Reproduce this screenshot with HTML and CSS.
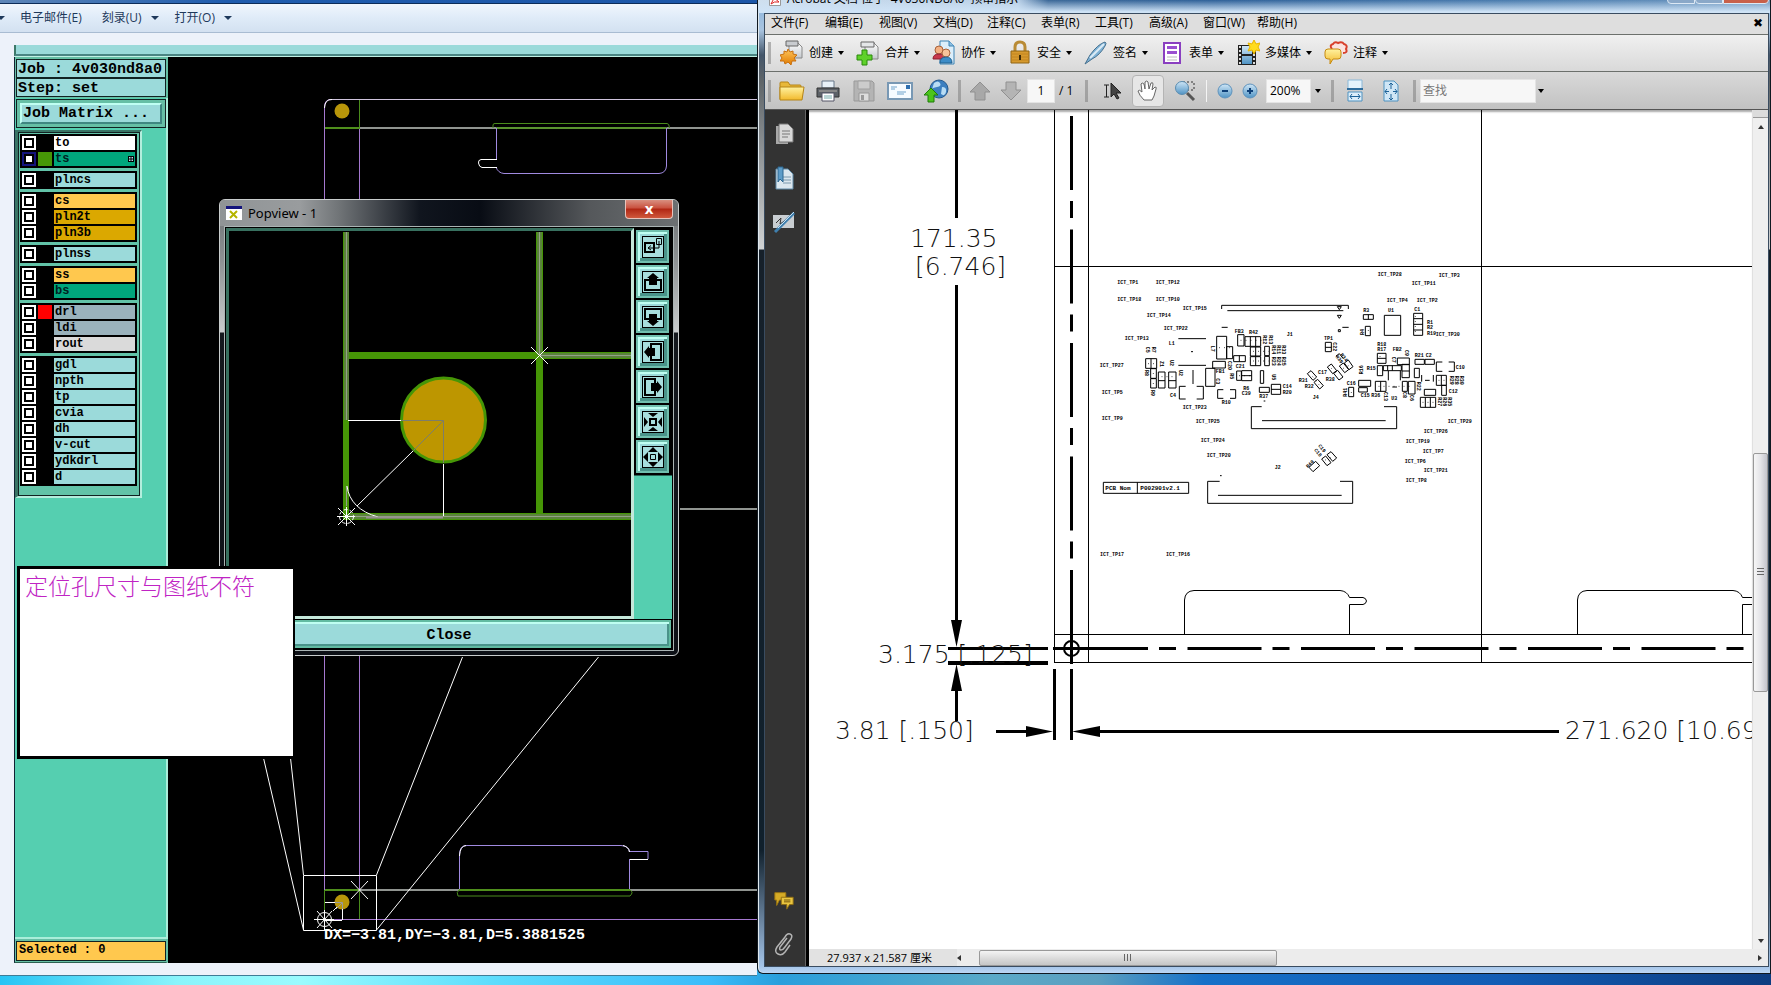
FILE: index.html
```html
<!DOCTYPE html>
<html lang="zh-CN">
<head>
<meta charset="utf-8">
<title>Popview - 1</title>
<link rel="stylesheet" href="styles.css">
</head>
<body>
<svg class="defs" aria-hidden="true">
  <defs>
    <linearGradient id="gBlue" x1="0" y1="0" x2="0" y2="1"><stop offset="0" stop-color="#cfe6f6"/><stop offset="1" stop-color="#4f93c4"/></linearGradient>
    <linearGradient id="gGold" x1="0" y1="0" x2="0" y2="1"><stop offset="0" stop-color="#fff2a0"/><stop offset="1" stop-color="#f2b92c"/></linearGradient>
    <linearGradient id="gOrange" x1="0" y1="0" x2="0" y2="1"><stop offset="0" stop-color="#ffc75e"/><stop offset="1" stop-color="#e07a00"/></linearGradient>
    <linearGradient id="gGrey" x1="0" y1="0" x2="0" y2="1"><stop offset="0" stop-color="#ffffff"/><stop offset="1" stop-color="#c4c8cc"/></linearGradient>
  </defs>
</svg>
<main class="desktop">

  <section class="explorer" aria-label="CAM">
    <div class="explorer-edge"></div>
    <nav class="explorer-menu">
      <i class="caret"></i>
      <button class="ex-item ex-mail">电子邮件(E)</button>
      <button class="ex-item">刻录(U) <i class="caret"></i></button>
      <button class="ex-item">打开(O) <i class="caret"></i></button>
    </nav>
    <div class="cam">
      <div class="cam-top"></div>
      <div class="cam-body">
        <aside class="cam-side">
          <div class="job-frame">
            <div class="job-cell">Job : 4v030nd8a0</div>
            <div class="job-cell">Step: set</div>
          </div>
          <div class="matrix-frame"><button class="matrix">Job Matrix ...</button></div>
          <div class="layers-well">
            <div class="layers">
              <div class="group">
                <label class="layer"><input type="checkbox"><i class="sw"></i><span class="nm white">to</span></label>
                <label class="layer"><input type="checkbox" checked><i class="sw green"></i><span class="nm emerald">ts<svg class="mark" viewBox="0 0 6 6"><path d="M0 .5h6M0 3h6M0 5.500h6M.5 0v6M3 0v6M5.500 0v6" stroke="#000" fill="none"/></svg></span></label>
              </div>
              <div class="group">
                <label class="layer"><input type="checkbox"><i class="sw"></i><span class="nm">plncs</span></label>
              </div>
              <div class="group">
                <label class="layer"><input type="checkbox"><i class="sw"></i><span class="nm amber">cs</span></label>
                <label class="layer"><input type="checkbox"><i class="sw"></i><span class="nm gold">pln2t</span></label>
                <label class="layer"><input type="checkbox"><i class="sw"></i><span class="nm gold">pln3b</span></label>
              </div>
              <div class="group">
                <label class="layer"><input type="checkbox"><i class="sw"></i><span class="nm">plnss</span></label>
              </div>
              <div class="group">
                <label class="layer"><input type="checkbox"><i class="sw"></i><span class="nm amber">ss</span></label>
                <label class="layer"><input type="checkbox"><i class="sw"></i><span class="nm emerald">bs</span></label>
              </div>
              <div class="group">
                <label class="layer"><input type="checkbox"><i class="sw red"></i><span class="nm slate">drl</span></label>
                <label class="layer"><input type="checkbox"><i class="sw"></i><span class="nm slate">ldi</span></label>
                <label class="layer"><input type="checkbox"><i class="sw"></i><span class="nm silver">rout</span></label>
              </div>
              <div class="group">
                <label class="layer"><input type="checkbox"><i class="sw"></i><span class="nm">gdl</span></label>
                <label class="layer"><input type="checkbox"><i class="sw"></i><span class="nm">npth</span></label>
                <label class="layer"><input type="checkbox"><i class="sw"></i><span class="nm">tp</span></label>
                <label class="layer"><input type="checkbox"><i class="sw"></i><span class="nm">cvia</span></label>
                <label class="layer"><input type="checkbox"><i class="sw"></i><span class="nm">dh</span></label>
                <label class="layer"><input type="checkbox"><i class="sw"></i><span class="nm">v-cut</span></label>
                <label class="layer"><input type="checkbox"><i class="sw"></i><span class="nm">ydkdrl</span></label>
                <label class="layer"><input type="checkbox"><i class="sw"></i><span class="nm">d</span></label>
              </div>
            </div>
          </div>
          <div class="selected-frame"><div class="selected">Selected : 0</div></div>
        </aside>
        <svg class="board" role="img" aria-label="Board outline">
          <g transform="translate(-168 -57)" fill="none" stroke-width="1">
            <path d="M324.500 920V106Q325 99 332 99.500" stroke="#a578d0"/>
            <path d="M324.500 108Q325 99 332 99.500" stroke="#fff"/>
            <path d="M332 99.500H757" stroke="#cfc4dd"/>
            <path d="M359.500 100V890M324 919.500H757" stroke="#a578d0"/>
            <path d="M359.500 100V128M325 127.500H360M324.500 890V919M359.500 890V919" stroke="#4a8c1c"/>
            <path d="M325 128H360" stroke="#4f8f1c" stroke-width="2"/>
            <path d="M360 128H757M360 890H757M680 509H757" stroke="#909490" stroke-width="2"/>
            <path d="M493 128V125Q493 123 496 123.500H667Q669 123 669.500 128" stroke="#4a8c1c"/>
            <path d="M496 128H667" stroke="#5a9430" stroke-width="2"/>
            <path d="M496.500 128V160M496 167Q498 173 504 173.500H659Q666 173 666.500 166V128" stroke="#a08ae0"/>
            <path d="M497 159.500H481Q478 160 478.500 163Q479 167 482 167.500H497" stroke="#fff"/>
            <circle cx="342" cy="111" r="7.500" fill="#b8960a"/>
            <path d="M325 890H359M459 890H630" stroke="#4f8f1c" stroke-width="2"/>
            <path d="M459 890Q456 892 458 896H630Q634 892 630 890" stroke="#4a8c1c"/>
            <path d="M459.500 889V854Q460 845 467 845.500H621Q629 846 629.500 852M629.500 859V889M630 851.500H648V859" stroke="#a08ae0"/>
            <path d="M459.500 856Q460 846 466 845.500M623 845.500Q629 847 629.500 852M630 859.500H648" stroke="#fff"/>
            <circle cx="342" cy="902" r="7.500" fill="#b8960a"/>
            <g stroke="#fff">
              <path d="M303.500 875.500H376.500V930.500H303.500ZM263.500 758L303.500 930M290.500 758L303.500 875M376.500 875L462.500 657M376.500 930L598.500 657"/>
              <path d="M325 902.500H335M342.500 909V920M325 920.500H342M333 911L337 907M351 881L368 899M368 881L351 899"/>
              <path d="M314 919.500H334M324.500 910V930M317 911L332 928M332 911L317 928"/>
              <circle cx="324.500" cy="919.500" r="7"/>
            </g>
            <path d="M335 902.500H342.500V909M342 903L336 909" stroke="#999"/>
          </g>
          <text x="156" y="882" class="cam-text">DX=−3.81,DY=−3.81,D=5.3881525</text>
        </svg>
      </div>
    </div>
  </section>

  <section class="popview" aria-label="Popview - 1">
    <header class="pop-title">
      <svg class="pop-icon" viewBox="0 0 16 14"><path fill="#fff" d="M0 0h16v14H0z"/><path fill="#14147c" d="M0 0h16v3H0z"/><path d="M4 5l7 7M11 5l-7 7" stroke="#b4b400" stroke-width="2"/></svg>
      <h1>Popview - 1</h1>
      <button class="pop-close" aria-label="关闭">x</button>
    </header>
    <div class="pop-body">
      <div class="pop-main">
        <svg class="pop-canvas" role="img" aria-label="Detail">
          <g transform="translate(-229 -231)" fill="none">
            <path d="M346 232V519" stroke="#469606" stroke-width="6"/>
            <path d="M539.500 232V516M346 355.500H631" stroke="#469606" stroke-width="7"/>
            <path d="M343 516.500H631" stroke="#469606" stroke-width="7"/>
            <path d="M346.500 232V420M539.500 232V355M540 355.500H631M346 516.500H631" stroke="#5b833c" stroke-width="5"/>
            <path d="M346.500 232V420M539.500 232V355M540 355.500H631M346 516.500H631M346.500 486V506" stroke="#94a088" stroke-width="1"/>
            <circle cx="443.500" cy="420" r="42" fill="#bd9600" stroke="#469606" stroke-width="3"/>
            <g stroke="#fff"><path d="M348 420.500H401M443.500 464V516M413 451L357 506M347 486Q350 509 378 517"/><path d="M531 347L548 364M548 347L531 364M337 516.500H355M346.500 507V526M338 508L355 525M355 508L338 525"/><circle cx="346.500" cy="516.500" r="7" stroke-dasharray="4 2"/></g>
            <path d="M401 420.500H443.500V463M443 421L413 451" stroke="#7d7d6a"/>
            <path d="M366 517.500H443" stroke="#96928e" stroke-width="2"/>
          </g>
        </svg>
        <div class="pop-tools">
          <button aria-label="Zoom window"><svg viewBox="0 0 22 22"><path d="M3 7h9v9H3z" class="t2"/><path d="M14.500 2.500h5v6h-5zM17 5v7H6m3-2.500L6 12l3 2" class="t1"/></svg></button>
          <button aria-label="Up"><svg viewBox="0 0 22 22"><path d="M7 9H3v10h16V9h-4" class="t2"/><path d="M11 2l6 5h-2v7H7V7H5z"/></svg></button>
          <button aria-label="Down"><svg viewBox="0 0 22 22"><path d="M7 13H3V3h16v10h-4" class="t2"/><path d="M11 20l6-5h-2V8H7v7H5z"/></svg></button>
          <button aria-label="Left"><svg viewBox="0 0 22 22"><path d="M9 7V3h10v16H9v-4" class="t2"/><path d="M2 11l5-6v2h6v8H7v2z"/></svg></button>
          <button aria-label="Right"><svg viewBox="0 0 22 22"><path d="M13 7V3H3v16h10v-4" class="t2"/><path d="M20 11l-5-6v2H9v8h6v2z"/></svg></button>
          <button aria-label="Zoom out"><svg viewBox="0 0 22 22"><path d="M8 8h6v6H8z" class="t2"/><path d="M11 6L6 2h10zM11 16l-5 4h10zM6 11L2 6v10zM16 11l4-5v10z"/></svg></button>
          <button aria-label="Zoom in"><svg viewBox="0 0 22 22"><path d="M8.500 8.500h5v5h-5z" class="t1"/><path d="M11 1L6 6h10zM11 21l-5-5h10zM1 11l5-5v10zM21 11l-5-5v10z"/></svg></button>
        </div>
      </div>
      <button class="pop-bottom">Close</button>
    </div>
  </section>

  <aside class="note">定位孔尺寸与图纸不符</aside>

  <section class="acrobat" aria-label="Acrobat">
    <header class="ac-title">
      <svg class="ac-logo" viewBox="0 0 12 14"><path fill="#fff" stroke="#999" d="M.5.5h11v13H.5z"/><path d="M2 12Q5 8 5 3Q6 8 10 10Q5 9 2 12" fill="none" stroke="#d22"/></svg>
      <span>Acrobat 文档 位于 '4V030ND8A0' 预审指示</span>
      <i class="winbtns"><i></i><i></i><i class="x"></i></i>
    </header>
    <div class="ac-inner">
      <nav class="ac-menu">
        <button>文件(F)</button><button>编辑(E)</button><button>视图(V)</button><button>文档(D)</button><button>注释(C)</button><button>表单(R)</button><button>工具(T)</button><button>高级(A)</button><button>窗口(W)</button><button>帮助(H)</button>
        <button class="doc-x" aria-label="关闭">✖</button>
      </nav>
      <div class="bar tasks">
        <i class="grip"></i>
        <button class="task"><svg viewBox="0 0 24 26"><path d="M9 3h9l4 4v11H9z" fill="url(#gGrey)" stroke="#888"/><path d="M6 1h12v5H6z" fill="#c9ccd0" stroke="#666"/><path d="M8 9l2 3 3-1 0 3 4 1-3 3 2 3-4 0-1 4-3-3-3 2-1-3-4 0 2-3-2-3 4-1 0-3 3 1z" fill="url(#gOrange)" stroke="#c87010"/></svg>创建<i class="caret"></i></button>
        <button class="task"><svg viewBox="0 0 24 26"><path d="M9 3h9l4 4v12H9z" fill="url(#gGrey)" stroke="#888"/><path d="M5 2h13v5H5z" fill="#e4e6e8" stroke="#666"/><path d="M6 10h5v5h5v5h-5v5H6v-5H1v-5h5z" fill="#5fd12a" stroke="#2b8a0c"/></svg>合并<i class="caret"></i></button>
        <button class="task"><svg viewBox="0 0 24 26"><path d="M8 1h9l5 5v18H8z" fill="#dceefa" stroke="#3d83b4"/><path d="M17 1v5h5" fill="#8dbfe2" stroke="#3d83b4"/><circle cx="7" cy="10" r="4" fill="#f3b184" stroke="#a8613a"/><path d="M1 19q0-5 6-5t6 5z" fill="#c8384c" stroke="#8a1f30"/><circle cx="14" cy="13" r="4" fill="#f6c39b" stroke="#a8613a"/><path d="M8 23q0-6 6-6t6 6z" fill="#3c8cc8" stroke="#20608f"/></svg>协作<i class="caret"></i></button>
        <button class="task"><svg viewBox="0 0 24 26"><path d="M7 12V7q0-5 5-5t5 5v5" fill="none" stroke="#b98b35" stroke-width="3"/><path d="M3 11h18v12H3z" fill="#d79a2e" stroke="#8f6414"/><path d="M3 14h18M3 17h18M3 20h18" stroke="#c08420"/><path d="M11 15h2v5h-2z" fill="#3c2a08"/></svg>安全<i class="caret"></i></button>
        <button class="task"><svg viewBox="0 0 24 26"><path d="M1 24L6 15Q14 4 21 2Q23 3 21 6Q16 15 8 19z" fill="#7fb2d6" stroke="#46708e"/><path d="M6 18L20 4" stroke="#dcebf5" stroke-width="2"/></svg>签名<i class="caret"></i></button>
        <button class="task"><svg viewBox="0 0 24 26"><path d="M4 3h16v20H4z" fill="#fff" stroke="#8a3fc0" stroke-width="2"/><path d="M7 6h10v3H7zM7 11h10v3H7z" fill="#9a4fd0"/><path d="M7 17h10M7 20h10" stroke="#bbb"/></svg>表单<i class="caret"></i></button>
        <button class="task"><svg viewBox="0 0 24 26"><path d="M2 5h18v20H2z" fill="#222"/><path d="M6 6h10v8H6zM6 16h10v8H6z" fill="url(#gBlue)"/><path d="M4 6v18M18 6v18" stroke="#ddd" stroke-width="2" stroke-dasharray="2 2"/><path d="M18 0l2 4 4-1-2 4 2 4-4-1-2 4-2-4-4 1 2-4-2-4 4 1z" fill="#ffdc1e" stroke="#e8b400"/></svg>多媒体<i class="caret"></i></button>
        <button class="task"><svg viewBox="0 0 24 26"><path d="M8 9Q5 5 9 4Q11 1 14 3Q18 1 20 4Q24 5 22 9Q24 13 19 13" fill="#fbe3e0" stroke="#d8402c" stroke-width="2"/><path d="M4 9h10q3 0 3 3v4q0 3-3 3H9l-3 5v-5H4q-3 0-3-3v-4q0-3 3-3z" fill="url(#gGold)" stroke="#c68a10"/></svg>注释<i class="caret"></i></button>
      </div>
      <div class="bar tools">
        <i class="grip"></i>
        <button class="tool" aria-label="打开"><svg viewBox="0 0 26 24"><path d="M1 20V4q0-1 1-1h7l2 3h10q1 0 1 1v13z" fill="#e8b83a" stroke="#b58416"/><path d="M1 21V8h24l-2 13z" fill="url(#gGold)" stroke="#b58416"/></svg></button>
        <button class="tool" aria-label="打印"><svg viewBox="0 0 26 24"><path d="M7 2h12v7H7z" fill="#e8f1f8" stroke="#678"/><path d="M2 9h22v9H2z" fill="#5d6268" stroke="#333"/><path d="M4 11h18v2H4z" fill="#888"/><path d="M7 14h12v8H7z" fill="#fff" stroke="#556"/><path d="M9 17h8M9 19h8" stroke="#7aa"/></svg></button>
        <button class="tool" aria-label="保存" disabled><svg viewBox="0 0 26 24"><path d="M3 2h18l2 2v18H3z" fill="#b4b4b4" stroke="#999"/><path d="M7 2h12v8H7z" fill="#ccc" stroke="#a0a0a0"/><path d="M8 14h10v8H8z" fill="#ddd" stroke="#999"/><path d="M10 16h3v5h-3z" fill="#999"/></svg></button>
        <button class="tool" aria-label="电子邮件"><svg viewBox="0 0 26 24"><path d="M1 4h24v16H1z" fill="#f6fbff" stroke="#7898b4" stroke-width="2"/><path d="M19 6h4v4h-4z" fill="#2e6fb0"/><path d="M4 8h6M4 10h4M10 13h9M10 15h7" stroke="#6fa3cc"/></svg></button>
        <button class="tool" aria-label="网络"><svg viewBox="0 0 26 24"><circle cx="16" cy="10" r="9" fill="#3c7fc0" stroke="#24588c"/><path d="M11 4q4-3 6 0t-3 4-5 2zM19 8q5 0 4 5t-5 2z" fill="#b8dcf4"/><path d="M8 9l7 7h-4v7H5v-7H1z" fill="#4cc41c" stroke="#1f7d08"/></svg></button>
        <i class="grip"></i>
        <button class="tool arrow" aria-label="上一页" disabled><svg viewBox="0 0 22 24"><path d="M11 3l10 10h-5v8H6v-8H1z" fill="#a8a8a8" stroke="#909090"/></svg></button>
        <button class="tool arrow" aria-label="下一页" disabled><svg viewBox="0 0 22 24"><path d="M11 21L1 11h5V3h10v8h5z" fill="#b4b4b4" stroke="#909090"/></svg></button>
        <input class="page-no" aria-label="页码" value="1"><span class="page-of">/ 1</span>
        <i class="grip"></i>
        <button class="tool sel" aria-label="选择"><svg viewBox="0 0 22 20"><path d="M2 4h5M4.500 4v12M2 16h5" stroke="#222" fill="none"/><path d="M9 2v14l3-3 3 5 2-1-3-5h5z" fill="#444" stroke="#222"/></svg></button>
        <button class="tool hand" aria-label="手形"><svg viewBox="0 0 24 24"><path d="M8 21Q3 16 2 12Q3 10 6 13L5 5Q6 3 8 5L9 10L9 3Q11 1 12 3L13 10L15 4Q17 3 17 5L16 11L19 8Q21 8 20 10L18 17L16 21z" fill="#fff" stroke="#666"/></svg></button>
        <button class="tool mag" aria-label="放大"><svg viewBox="0 0 24 24"><path d="M10 3h11v8H12" fill="none" stroke="#333" stroke-dasharray="2 2"/><circle cx="9" cy="9" r="6.500" fill="url(#gBlue)" stroke="#5a8cb0"/><path d="M14 14l7 7" stroke="#555" stroke-width="3"/></svg></button>
        <i class="rule"></i>
        <button class="tool zoomer" aria-label="缩小"><svg viewBox="0 0 16 16"><circle cx="8" cy="8" r="7" fill="url(#gBlue)" stroke="#5f93bd"/><path d="M5 8h6" stroke="#0d3f78" stroke-width="2"/></svg></button>
        <button class="tool zoomer" aria-label="放大比例"><svg viewBox="0 0 16 16"><circle cx="8" cy="8" r="7" fill="url(#gBlue)" stroke="#5f93bd"/><path d="M5 8h6M8 5v6" stroke="#0d3f78" stroke-width="2"/></svg></button>
        <input class="zoom-val" aria-label="缩放" value="200%"><i class="caret"></i>
        <i class="grip"></i>
        <button class="tool" aria-label="适合宽度"><svg viewBox="0 0 26 24"><path d="M6 1h14v9H6z" fill="#e4f2fb" stroke="#8ab8d8"/><path d="M5 10h16" stroke="#2d6c9c" stroke-width="2"/><path d="M6 13h14v9H6z" fill="#dceefa" stroke="#4e92c0"/><path d="M8 17.500h10M10 15l-2 2.500L10 20M16 15l2 2.500L16 20" stroke="#1d6298" fill="none"/></svg></button>
        <button class="tool" aria-label="适合页面"><svg viewBox="0 0 26 24"><path d="M6 2h10l4 4v16H6z" fill="#cfe6f6" stroke="#4e92c0"/><path d="M13 4v6M11 6l2-2 2 2M13 21v-6M11 19l2 2 2-2M7 12.500h4M9 10l-2 2.500L9 15M19 12.500h-4M17 10l2 2.500L17 15" stroke="#1d6298" fill="none"/></svg></button>
        <i class="grip"></i>
        <input class="find" aria-label="查找" placeholder="查找"><i class="caret"></i>
      </div>
      <div class="ac-work">
        <aside class="ac-nav">
          <button aria-label="页面"><svg viewBox="0 0 22 24"><path d="M3 4h12v18H3z" fill="#a8a8a8"/><path d="M6 2h9l5 5v13H6z" fill="#d8d8d8" stroke="#777"/><path d="M9 9h8M9 12h8M9 15h6" stroke="#777"/></svg></button>
          <button aria-label="书签"><svg viewBox="0 0 22 24"><path d="M3 3h12l5 5v15H3z" fill="#dbe7ef" stroke="#5f89a6"/><path d="M10 11h8M10 14h8M10 17h8" stroke="#7a98ac"/><path d="M5 1h5v15l-3-3-2 3z" fill="#5d9cc8" stroke="#2c6690"/></svg></button>
          <button aria-label="签名"><svg viewBox="0 0 22 24"><path d="M0 5h21v13H0z" fill="#c9ced2"/><path d="M3 13l5-5-1 6 6-4" stroke="#333" fill="none"/><path d="M2 22L21 3" stroke="#3f7fae" stroke-width="3"/><path d="M5 18L21 2" stroke="#c6e0f2"/></svg></button>
          <i class="fill"></i>
          <button aria-label="注释"><svg viewBox="0 0 24 20"><path d="M2 2h12v8H7l-3 6v-6H2z" fill="#d5ab26" stroke="#9c7610"/><path d="M9 7h13v8h-4l-3 5v-5H9z" fill="#e9c540" stroke="#8c6a10"/><path d="M12 10h7M12 12h7" stroke="#6a4f08"/></svg></button>
          <button aria-label="附件"><svg viewBox="0 0 22 24"><path d="M14 6L7 15q-1 3 1 3t4-3L18 7q2-4-1-5t-5 3L4 15q-3 5 1 7t7-2l5-7" fill="none" stroke="#b4b4b4" stroke-width="1.500"/></svg></button>
        </aside>
        <div class="ac-doc">
          <svg class="sheet" role="img" aria-label="Drawing">
            <g transform="translate(-809 -110)" fill="none" stroke="#000">
              <path d="M1054.500 110V662M1088.500 110V662M1481.500 110V662M1054 266.500H1760M1054 634.500H1760M1054 662.500H1760"/>
              <path d="M1184.500 634V600Q1185 591 1194 590.500H1340Q1347 591 1349.500 597.500H1363Q1366 598 1366.500 601Q1366 604 1363 604.500H1349.500V634"/>
              <path d="M1577.500 634V600Q1578 591 1587 590.500H1733Q1740 591 1742.500 597.500H1760M1760 604.500H1742.500V634"/>
              <g stroke-width="3">
                <path d="M956.500 110V218M956.500 285V622M956.500 690V721M948 648.500H1048M1071.500 570V664M1054.500 669V740M1071.500 669V740M996 731.500H1030M1098 731.500H1559M1053 648.500H1074"/>
                <path d="M948 663H1048" stroke-width="4"/>
                <path d="M1071.500 116V569M1074 648.500H1744" stroke-dasharray="74 11 17 11.500"/>
              </g>
              <circle cx="1071.500" cy="648.500" r="7.500" stroke-width="2"/>
              <path d="M951 620h11l-5.500 27zM951 691h11l-5.500-27zM1026 726v11l27-5.500zM1100 726v11l-28-5.500z" fill="#000" stroke="none"/>
            </g>
            <g class="dim">
              <text x="101" y="137">171.35</text><text x="106" y="165">[6.746]</text>
              <text x="69" y="553">3.175 [.125]</text><text x="26" y="629">3.81 [.150]</text>
              <text x="756" y="629">271.620 [10.693]</text>
            </g>
            <svg x="281" y="150" width="390" height="260" viewBox="0 0 1170 780">
              <g class="pcb" fill="none" stroke="#000" stroke-width="3">
                <path d="M395 147V136H775V147M412 152H760M395 202H413M757 202H776M265 236H348M265 316H348M515 440H484V506H920V440H882M516 482H887M389 664H353V730H788V664H750M384 706H755M40 667H296V700H40ZM142 667V700"/>
                <path d="M883 166h49v60h-49zM971 160h27v66h-27zM971 176h27M971 193h27M971 210h27M820 164h30v14h-30zM835 164v14M826 199h15v28h-15zM706 247h18v28h-18zM706 262h18"/>
                <path d="M443 224h19v34h-19zM465 230h47v29h-47zM481 230v29M497 230v29M481 261h31v27h-31zM497 261v27M481 290h31v27h-31zM497 290v27M524 259h14v28h-14zM524 289h14v28h-14zM380 229h30v68h-30zM410 260h18v36h-18zM431 287h35v18h-35zM448 287v18M368 304h38v20h-38zM440 333h14v28h-14zM455 332h30v30h-30zM455 347h30M511 332h10v38h-10zM508 382h30v15h-30zM544 373h28v30h-28zM544 388h28M347 325h28v54h-28zM309 330v42M205 336h20v48h-20zM205 362h20M236 336h22v48h-22zM236 362h22M167 296h33v29h-33zM183 296v29M182 326h17v29h-17zM182 356h17v28h-17z"/>
                <path d="M287 379H268V417H287M320 379H340V417H320M400 389H383V415H400M420 389H437V415H420M1057 306H1039V334H1057M1076 306H1093V334H1076"/>
                <path d="M862 280h26v30h-26zM862 295h26M862 317h16v30h-16zM880 317h54v15h-54zM893 317v15M907 317v15M922 294h36v20h-36zM936 313h22v40h-22zM936 333h22M973 325h15v28h-15zM975 298h28v15h-28zM1005 298h28v15h-28zM1039 346h30v30h-30zM1054 346v30M1055 376h14v30h-14zM1003 388h34v18h-34zM991 412h46v30h-46zM1006 412v30M1021 412v30M806 361h36v18h-36zM806 383h26v13h-26zM776 382h15v28h-15zM856 364h32v30h-32zM872 364v30M937 364h15v30h-15zM955 364h20v38h-20zM895 333v28M931 333v28M995 345v20M1030 345v20M907 381h14M1005 361h14"/>
                <path d="M652 341l11-9 17 19-11 10zM672 367l11-9 17 19-11 10zM712 321l12-9 16 20-12 9zM731 340l12-9 16 20-12 9zM748 318l12-9 16 20-12 9zM763 309l12-9 14 20-12 9zM738 288l10-7 11 14M657 622l20-18 12 13-20 18zM695 597l12-9 16 20-12 9zM711 584l12-9 17 19-12 10zM742 140h12l-6 9zM742 166h12l-6 9zM745 209h6v6h-6zM303 275h6M390 647h5M521 423h5"/>
                <path stroke-dasharray="2 13" d="M452 241H535M489 274H535M489 303H535M175 311H195M190 340V375M215 350H250M387 263H420M448 347H480M866 379H970M1046 361H1070M998 427H1035M976 168V220M870 288V303M784 396V400M835 211V215M668 350L690 378M724 325L745 345M760 325L780 315M706 600L725 592"/>
              </g>
              <g class="tp">
                <text x="82" y="71">ICT_TP1</text><text x="197" y="71">ICT_TP12</text><text x="82" y="124">ICT_TP18</text><text x="197" y="124">ICT_TP10</text><text x="278" y="150">ICT_TP15</text><text x="170" y="172">ICT_TP14</text><text x="221" y="210">ICT_TP22</text><text x="104" y="240">ICT_TP13</text><text x="29" y="320">ICT_TP27</text><text x="35" y="403">ICT_TP5</text><text x="35" y="479">ICT_TP9</text><text x="278" y="447">ICT_TP23</text><text x="317" y="488">ICT_TP25</text><text x="332" y="545">ICT_TP24</text><text x="350" y="590">ICT_TP20</text>
                <text x="863" y="48">ICT_TP28</text><text x="1046" y="51">ICT_TP3</text><text x="965" y="75">ICT_TP11</text><text x="890" y="126">ICT_TP4</text><text x="980" y="126">ICT_TP2</text><text x="1037" y="229">ICT_TP30</text><text x="1073" y="488">ICT_TP29</text><text x="1001" y="518">ICT_TP26</text><text x="947" y="548">ICT_TP19</text><text x="998" y="578">ICT_TP7</text><text x="944" y="608">ICT_TP6</text><text x="1001" y="635">ICT_TP21</text><text x="947" y="665">ICT_TP8</text>
                <text x="820" y="157">R3</text><text x="894" y="155">U1</text><text x="973" y="154">C1</text><text x="1011" y="192">R1</text><text x="1011" y="207">R2</text><text x="1011" y="225">R19</text><text x="702" y="240">TP1</text><text x="590" y="229">J1</text><text x="668" y="418">J4</text><text x="554" y="628">J2</text><text x="434" y="220">FB3</text><text x="477" y="223">R42</text><text x="236" y="256">L1</text><text x="437" y="324">C21</text><text x="377" y="339">FB1</text><text x="460" y="389">R6</text><text x="455" y="404">C39</text><text x="508" y="414">R37</text><text x="578" y="385">C14</text><text x="578" y="402">R20</text><text x="240" y="410">C4</text><text x="395" y="433">R10</text><text x="626" y="366">R31</text><text x="644" y="384">R32</text><text x="684" y="342">C17</text><text x="707" y="363">R38</text><text x="862" y="257">R18</text><text x="862" y="273">R17</text><text x="908" y="274">FB2</text><text x="974" y="290">R21</text><text x="1007" y="290">C2</text><text x="1097" y="327">C10</text><text x="830" y="329">R15</text><text x="770" y="376">C16</text><text x="812" y="412">C15</text><text x="844" y="412">R36</text><text x="904" y="420">U3</text><text x="1076" y="398">C12</text>
                <text transform="translate(167 260) rotate(90)">C5</text><text transform="translate(187 260) rotate(90)">R7</text><text transform="translate(209 303) rotate(90)">Z1</text><text transform="translate(239 300) rotate(90)">U2</text><text transform="translate(268 330) rotate(90)">U2</text><text transform="translate(184 390) rotate(90)">R9</text><text transform="translate(165 330) rotate(90)">R8</text><text transform="translate(362 257) rotate(90)">L7</text><text transform="translate(378 355) rotate(90)">C3</text><text transform="translate(413 303) rotate(90)">C20</text><text transform="translate(420 340) rotate(90)">R5</text><text transform="translate(545 343) rotate(90)">U5</text><text transform="translate(520 226) rotate(90)">R12</text><text transform="translate(536 226) rotate(90)">R13</text><text transform="translate(545 256) rotate(90)">R14</text><text transform="translate(560 256) rotate(90)">R11</text><text transform="translate(575 256) rotate(90)">R33</text><text transform="translate(545 290) rotate(90)">R23</text><text transform="translate(560 290) rotate(90)">R24</text><text transform="translate(575 290) rotate(90)">R25</text><text transform="translate(728 247) rotate(90)">C22</text><text transform="translate(822 225) rotate(-90)">R4</text><text transform="translate(820 343) rotate(-90)">R16</text><text transform="translate(770 410) rotate(-90)">R41</text><text transform="translate(905 290) rotate(90)">C7</text><text transform="translate(944 270) rotate(90)">C9</text><text transform="translate(940 396) rotate(90)">C8</text><text transform="translate(960 405) rotate(90)">C6</text><text transform="translate(981 365) rotate(90)">R22</text><text transform="translate(882 396) rotate(90)">C13</text><text transform="translate(1080 347) rotate(90)">R29</text><text transform="translate(1095 347) rotate(90)">R28</text><text transform="translate(1110 347) rotate(90)">R30</text><text transform="translate(1043 412) rotate(90)">R27</text><text transform="translate(1060 412) rotate(90)">R26</text><text transform="translate(1075 412) rotate(90)">R35</text><text transform="translate(736 290) rotate(52)">R39</text><text transform="translate(750 284) rotate(52)">R34</text><text transform="translate(654 625) rotate(-45)">R40</text><text transform="translate(672 570) rotate(52)">C18</text><text transform="translate(684 557) rotate(52)">C19</text>
              </g>
              <g class="pcb-no"><text x="46" y="691">PCB Nom</text><text x="151" y="691">P002901v2.1</text></g>
            </svg>
            <g class="tp small"><text x="291" y="446">ICT_TP17</text><text x="357" y="446">ICT_TP16</text></g>
          </svg>
          <div class="vscroll"><i class="split"></i><i class="tri up"></i><i class="vthumb"></i><i class="tri down"></i></div>
          <footer class="status">
            <span class="size">27.937 x 21.587 厘米</span>
            <i class="tri left"></i><i class="hthumb"></i><i class="tri right"></i>
          </footer>
        </div>
      </div>
    </div>
  </section>
</main>
</body>
</html>
```
FILE: styles.css
```css
* { box-sizing: border-box; }
body {
  margin: 0;
  font: 12px/16px "Open Sans", "Noto Sans CJK SC", sans-serif;
  color: #000;
}
button, input { font: inherit; color: inherit; margin: 0; padding: 0; border: 0; background: none; border-radius: 0; }
i { font-style: normal; }
svg { display: block; }
.defs { position: absolute; width: 0; height: 0; }

.desktop {
  position: relative;
  height: 100vh;
  overflow: hidden;
  background: linear-gradient(90deg, #27c4f4 0, #8af4fb 10%, #9afbfe 17%, #5cdcfc 28%, #3bbcfa 40%, #2a9fdc 44%, #5aa9c8 56%, #5c9fc0 62%, #1670c8 68%, #125cb4 85%, #0d3c80 100%);
}

/* explorer window with the CAM application */
.explorer {
  position: absolute;
  left: 0; top: 0; bottom: 9px;
  width: 757px;
  display: flex;
  flex-direction: column;
  background: #edf2fa;
  border-bottom: 1px solid #3f7c96;
}
.explorer-edge { height: 4px; background: linear-gradient(90deg, #5d86b8 0, #1f5cae 30%, #1c56a8); border-bottom: 1px solid #0c2c58; }
.explorer-menu {
  display: flex;
  align-items: center;
  height: 29px;
  color: #1e395b;
  background: linear-gradient(#f0f6fd, #dfebf8 50%, #d3e1f1);
  border-bottom: 1px solid #a9bcd2;
}
.ex-item { display: flex; align-items: center; gap: 9px; margin-right: 16px; }
.ex-mail { margin-left: 15px; margin-right: 20px; }
.caret { flex: none; border: 3px solid transparent; border-top: 4px solid currentColor; border-bottom: 0; width: 6px; }
.explorer-menu .caret { border-width: 4px 4px 0; width: 8px; }
.explorer-menu > .caret { margin-left: -3px; }

.cam { flex: 1; min-height: 0; display: flex; flex-direction: column; margin: 12px 0 12px 14px; background: #000; font: bold 15px/18px "Liberation Mono", monospace; }
.cam-top { height: 11px; background: #9bdada; border-left: 2px solid #3d7869; border-bottom: 2px solid #4a8583; box-shadow: 0 1px #c0f0e4; margin-bottom: 1px; }
.cam-body { flex: 1; min-height: 0; display: flex; }
.cam-side {
  width: 154px;
  flex: none;
  display: flex;
  flex-direction: column;
  background: #55cfb0;
  border-left: 1px solid #123;
  border-right: 2px solid #a9eeda;
  border-bottom: 1px solid #2c6152;
}
.job-frame { padding: 2px 2px 1px 1px; background: #66bfa5; margin-right: -2px; }
.job-cell { height: 19px; padding-left: 1px; border: 1px solid #122; background: #9bdada; white-space: nowrap; line-height: 19px; }
.matrix-frame { margin: 1px 0 0 1px; padding: 3px; border: 1px solid #122; background: #66bfa5; }
.matrix {
  display: block; width: 100%; height: 21px; padding-left: 1px; text-align: left; line-height: 16px;
  background: #9bdada; border: 2px solid; border-color: #bffff2 #3f8781 #3f8781 #bffff2;
}
.layers-well { width: 127px; margin-top: 2px; border: solid; border-width: 2px 2px 2px 3px; border-color: #397465 #b4eedd #b4eedd #397465; }
.layers { border: 1px solid #122; background: #62c3a8; padding: 1px 2px 9px 1px; display: flex; flex-direction: column; gap: 3px; }
.group { background: #000; padding: 2px; display: flex; flex-direction: column; gap: 2px; }
.layer { display: grid; grid-template-columns: 14px 14px 1fr; gap: 2px; height: 14px; font-size: 12px; line-height: 14px; }
.layer input { appearance: none; width: 14px; height: 14px; border: 2px solid #fff; background: #fff; box-shadow: inset 0 0 0 2px #000; }
.layer input:checked { border-color: #14147c; }
.sw.green { background: #469606; }
.sw.red { background: #f00; }
.nm { display: flex; justify-content: space-between; align-items: center; padding: 0 1px; background: #9bdada; }
.white { background: #fff; }
.emerald { background: #00a67c; color: #022; }
.amber { background: #ffc84e; }
.gold { background: #dba800; }
.slate { background: #9ab2bc; }
.silver { background: #dadada; }
.mark { width: 6px; height: 6px; background: #bde; }
.selected-frame { margin-top: auto; margin-right: -2px; padding: 2px 2px 1px 1px; background: #66bfa5; border-top: 2px solid #a9eeda; }
.selected { height: 20px; padding-left: 2px; background: #ffc84e; border: 1px solid #122; font-size: 12px; line-height: 17px; }
.board { flex: 1; min-width: 0; height: 100%; }
.cam-text { fill: #fff; font: bold 15px "Liberation Mono", monospace; }

/* floating detail window */
.popview {
  position: absolute;
  left: 219px; top: 199px;
  width: 460px; height: 457px;
  display: flex;
  flex-direction: column;
  padding: 0 5px 4px;
  border: 1px solid #c8cccc;
  border-radius: 6px;
  background: linear-gradient(#6c7072 0, #8d9193 60px, #c9cccd 132px, #14181d 133px, #0d1016);
}
.pop-title {
  display: flex;
  gap: 6px;
  height: 26px;
  margin: 0 -5px;
  padding-left: 6px;
  border-radius: 5px 5px 0 0;
  background: linear-gradient(90deg, #909496 0, #999c9e 80px, #6f7376 120px, #10151e 200px, #080c14 260px, #55585b 370px, #6c7072);
}
.pop-title h1 { flex: 1; margin: 4px 0 0; font: 13px/18px "Noto Sans", sans-serif; }
.pop-icon { width: 16px; height: 14px; margin-top: 6px; }
.pop-close {
  width: 48px; height: 19px; margin-right: 5px; padding-bottom: 3px;
  border: 1px solid #e8c4bc; border-top: 0; border-radius: 0 0 4px 4px;
  background: linear-gradient(#d98f80, #c9503e 45%, #b02614 50%, #d0583c);
  color: #fff; font: bold 15px/14px "Open Sans", sans-serif;
}
.pop-body { flex: 1; min-height: 0; display: flex; flex-direction: column; padding: 1px; background: #000; border: 1px solid #aab4b4; margin: 0 -1px; }
.pop-main { flex: 1; min-height: 0; display: flex; }
.pop-canvas { flex: 1; min-width: 0; height: 100%; border: solid; border-width: 3px; border-color: #38705f #c4e8da #c4e8da #38705f; }
.pop-tools { width: 38px; display: flex; flex-direction: column; gap: 2px; padding: 2px 2px 0; background: linear-gradient(#000 247px, #55cfb0 248px); }
.pop-tools button { width: 33px; height: 33px; padding: 2px; background: #9bdada; border: 2px solid #70bfae; box-shadow: inset 2px 2px #bffff2, inset -3px -3px #4a938a; }
.pop-tools svg { width: 22px; height: 22px; margin: 1px auto; outline: 1px solid #000; outline-offset: -1px; background: #a8dede; }
.t1 { fill: none; stroke: #000; }
.t2 { fill: none; stroke: #000; stroke-width: 2; }
.pop-bottom { height: 28px; margin: 1px; padding-top: 3px; font: bold 15px/20px "Liberation Mono", monospace; background: #9bdada; border: 2px solid #62bba2; box-shadow: inset 1px 2px #bffff2, inset -2px -2px #4a938a; }

.note {
  position: absolute;
  left: 17px; top: 566px;
  width: 278px; height: 193px;
  padding: 4px 5px;
  background: #fff;
  border: 3px solid #000;
  border-right-width: 2px;
  color: #c024c4;
  font: 300 23px/24px "Noto Sans CJK SC", sans-serif;
}

/* Acrobat window */
.acrobat {
  position: absolute;
  left: 757px; right: 0; top: 0; bottom: 11px;
  display: flex;
  flex-direction: column;
  padding: 0 1px 6px 6px;
  border: 1px solid #101820;
  border-top: 0;
  border-radius: 0 0 0 6px;
  box-shadow: inset 1px 0 #dfe8ee;
  background: linear-gradient(#8ab4dc 0, #a9c4e0 30px, #44566a 55px, #5e6468 80px, #d0d2d3 249px, #16202a 250px, #10202c 850px, #a4c4e8 966px, #bcd6f4);
}
.ac-title {
  position: relative;
  display: flex;
  align-items: flex-end;
  gap: 6px;
  height: 13px;
  padding: 0 0 7px 11px;
  margin: 0 -1px 0 -6px;
  overflow: hidden;
  background: linear-gradient(#0000 0, #cfe3f6 90%), linear-gradient(90deg, #cfdfee 0, #b8cfe6 260px, #3a6797 290px, #2e6098 45%, #4a7cae 75%, #6f98c0);
}
.ac-title > span { white-space: nowrap; line-height: 16px; flex: none; margin-bottom: -1px; }
.ac-logo { width: 12px; height: 14px; flex: none; }
.winbtns { position: absolute; right: 1px; top: -12px; display: flex; }
.winbtns i { height: 16px; width: 28px; border: 1px solid #dce8f4; background: #8aa8c8; border-radius: 0 0 0 4px; }
.winbtns .x { width: 46px; background: #c8604a; border-radius: 0 0 4px 0; }
.ac-inner { flex: 1; min-height: 0; display: flex; flex-direction: column; border: 1px solid #3a4c60; background: #fff; }
.ac-menu {
  display: grid;
  grid-template-columns: repeat(10, 54px) 1fr;
  height: 21px;
  padding-left: 6px;
  background: #dedede;
  border-bottom: 1px solid #6c706c;
}
.ac-menu button { text-align: left; white-space: nowrap; line-height: 16px; padding-bottom: 2px; }
.ac-menu .doc-x { text-align: right; padding-right: 5px; }
.bar { display: flex; align-items: center; padding-left: 3px; flex: none; }
.tasks { height: 37px; background: linear-gradient(#f0f0f0, #d9d9d9); border-bottom: 1px solid #6c706c; }
.tools { height: 38px; background: linear-gradient(#d9d9d9, #c2c2c2); border-bottom: 1px solid #555; }
.grip { flex: none; width: 3px; height: 22px; background: radial-gradient(#777 1px, #0000 1px) 0 0 / 2px 2px; opacity: .5; }
.task { display: flex; align-items: center; gap: 5px; min-width: 76px; padding-left: 8px; white-space: nowrap; }
.task svg { width: 24px; height: 26px; }
.tool { width: 36px; height: 32px; display: grid; place-items: center; flex: none; }
.tool svg { width: 26px; height: 24px; }
.tasks .grip + .task { margin-left: 1px; }
.task:nth-of-type(7) { min-width: 88px; }
.tools .grip + .tool { margin-left: 3px; }
.tools .tool + .grip { margin-left: 4px; }
.arrow { width: 31px; }
.arrow svg { width: 22px; }
.page-no, .zoom-val, .find { height: 24px; background: #f7f7f7; border: 1px solid #e4e4e4; }
.page-no { width: 28px; text-align: center; margin-left: 1px; }
.page-of { width: 30px; padding-left: 4px; white-space: nowrap; }
.tools .grip + .sel { width: 22px; margin: 0 8px 0 14px; }
.sel svg { width: 22px; height: 20px; }
.tools .hand { width: 32px; background: #e6e6e6; border: 1px solid #b4b4b4; border-radius: 4px; }
.hand svg { width: 24px; }
.tools .mag { width: 42px; }
.rule { width: 1px; height: 22px; background: #f4f4f4; margin-right: 5px; }
.zoomer { width: 25px; }
.zoomer svg { width: 16px; height: 16px; }
.zoom-val { width: 45px; padding-left: 3px; margin-left: 4px; margin-right: 2px; }
.tools .caret { margin: 0 10px 0 2px; }
.find { width: 116px; margin-left: 4px; padding-left: 2px; }
.find::placeholder { color: #777; opacity: 1; }

.ac-work { flex: 1; min-height: 0; display: flex; }
.ac-nav { width: 44px; flex: none; display: flex; flex-direction: column; align-items: flex-start; padding: 12px 0 10px 8px; background: #333; border-right: 3px solid #000; box-shadow: inset -1px 0 #666; gap: 20px; }
.ac-nav button svg { width: 22px; height: 24px; }
.ac-nav .fill { flex: 1; }
.ac-doc { flex: 1; min-width: 0; display: grid; grid-template-columns: 1fr 16px; grid-template-rows: 1fr 17px; background: #fff; }
.sheet { width: 100%; height: 100%; min-height: 0; box-shadow: inset 0 3px 2px -1px #aaa; }
.dim { font: 200 25px "DejaVu Sans", "Lato", sans-serif; fill: #111; }
.tp { font: bold 15px "Liberation Mono", monospace; }
.tp.small { font-size: 5px; }
.pcb-no { font: bold 18px "Liberation Mono", monospace; }
.vscroll { display: flex; flex-direction: column; align-items: center; background: #efefef; border-left: 1px solid #e0e0e0; }
.split { width: 100%; height: 8px; background: #dcdcdc; border-bottom: 1px solid #999; }
.tri { border: 3px solid transparent; flex: none; }
.up { border-bottom: 4px solid #333; border-top: 0; margin-top: 7px; }
.down { border-top: 4px solid #333; border-bottom: 0; margin: auto 0 6px; }
.left { border-right: 4px solid #333; border-left: 0; }
.right { border-left: 4px solid #333; border-right: 0; margin: 0 6px 0 auto; }
.vthumb { width: 15px; height: 239px; margin-top: 324px; border: 1px solid #999; border-radius: 2px; background: repeating-linear-gradient(#666 0 1px, #0000 1px 3px) center / 7px 9px no-repeat, linear-gradient(90deg, #f6f6f6, #e4e4e8 50%, #c4c4cc); }
.status { grid-column: 1 / -1; display: flex; align-items: center; background: #ececec; }
.status .size { width: 148px; padding-left: 18px; white-space: nowrap; background: #e2e2e2; font-size: 11px; line-height: 17px; }
.hthumb { width: 298px; height: 16px; margin-left: 18px; border: 1px solid #999; border-radius: 2px; background: repeating-linear-gradient(90deg, #666 0 1px, #0000 1px 3px) center / 9px 7px no-repeat, linear-gradient(#f4f4f4, #dcdcdc 50%, #c6c6c6); }
```
